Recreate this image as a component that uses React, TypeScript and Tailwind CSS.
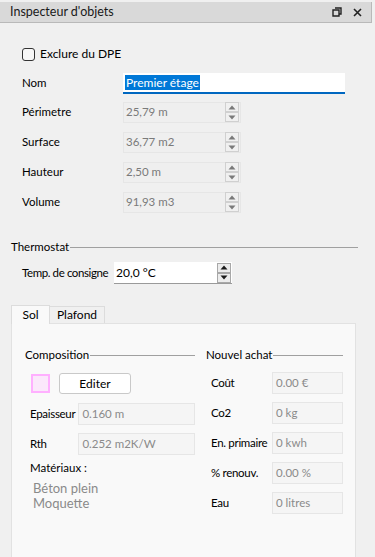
import React from "react";

const font = { fontFamily: "Lato, 'Noto Sans', sans-serif" };

function Spin({ active }: { active?: boolean }) {
  const tri = active ? "#1a1a1a" : "#7a7a7a";
  const box = active
    ? "w-[14px] h-[10px] border border-[#a8a8a8] bg-[#ececec] flex items-center justify-center"
    : "w-[14px] h-[10px] border border-[#d0d0d0] bg-[#f0f0f0] flex items-center justify-center";
  return (
    <div className="flex flex-col mr-[1px]">
      <div className={box}>
        <svg width="8" height="5" viewBox="0 0 8 5">
          <path d="M4 0.5 L7.5 4.5 L0.5 4.5 Z" fill={tri} />
        </svg>
      </div>
      <div className={box}>
        <svg width="8" height="5" viewBox="0 0 8 5">
          <path d="M0.5 0.5 L7.5 0.5 L4 4.5 Z" fill={tri} />
        </svg>
      </div>
    </div>
  );
}

function SpinRow({ label, value }: { label: string; value: string }) {
  return (
    <div className="flex items-center h-[30px]">
      <div className="w-[101px] text-[11.5px] text-black whitespace-nowrap">{label}</div>
      <div className="w-[118px] h-[21px] border border-[#e6e6e6] bg-[#efefef] flex items-center justify-between pl-[2px]">
        <span className="text-[11.5px] text-[#7a7a7a]">{value}</span>
        <Spin />
      </div>
    </div>
  );
}

function Field({ label, value, lw, fw }: { label: string; value: string; lw: string; fw: string }) {
  return (
    <div className="flex items-center h-[30px]">
      <div className={`${lw} text-[11.5px] tracking-[-0.3px] text-black whitespace-nowrap`}>{label}</div>
      <div className={`${fw} h-[22px] border border-[#e6e6e6] bg-[#f5f5f5] flex items-center pl-[3px]`}>
        <span className="text-[11.5px] text-[#8a8a8a] whitespace-nowrap">{value}</span>
      </div>
    </div>
  );
}

function Heading({ text }: { text: string }) {
  return (
    <div className="flex items-center h-[12px]">
      <span className="text-[11.5px] text-black leading-none">{text}</span>
      <div className="flex-1 h-px bg-[#a0a0a0] ml-[1px]" />
    </div>
  );
}

export default function App() {
  return (
    <div className="w-[375px] h-[557px] bg-[#f0f0f0] overflow-hidden" style={font}>
      <div className="h-[2px] bg-[#f0f0f0]" />
      <div className="h-[21px] bg-[#d9d9d9] border-b border-r border-[#b9b9b9] mr-[3px] flex items-center pl-[10px] pr-[9px]">
        <span className="text-[12.5px] text-[#1a1a1a] flex-1">Inspecteur d'objets</span>
        <svg width="10" height="10" viewBox="0 0 10 10" className="mr-[11px]">
          <path d="M3 1 H9 V7 H7 M1 3 H7 V9 H1 Z" fill="none" stroke="#222" strokeWidth="1.4" />
        </svg>
        <svg width="9" height="9" viewBox="0 0 9 9">
          <path d="M1 1 L8 8 M8 1 L1 8" stroke="#222" strokeWidth="1.6" />
        </svg>
      </div>

      <div className="pl-[22px] pt-[24px]">
        <div className="flex items-center h-[14px]">
          <div className="w-[13px] h-[13px] rounded-[3px] border border-[#333] bg-[#f7f7f7]" />
          <span className="ml-[5px] text-[12px] text-black">Exclure du DPE</span>
        </div>

        <div className="flex items-center h-[22px] mt-[11px]">
          <div className="w-[101px] text-[11.5px] text-black">Nom</div>
          <div className="w-[222px] h-[21px] bg-white border-b-2 border-[#0067c0] flex items-center pl-[2px]">
            <span className="text-[12px] text-white bg-[#0078d7] leading-[15px] px-px">Premier étage</span>
          </div>
        </div>

        <div className="mt-[3px]">
          <SpinRow label="Périmetre" value="25,79 m" />
          <SpinRow label="Surface" value="36,77 m2" />
          <SpinRow label="Hauteur" value="2,50 m" />
          <SpinRow label="Volume" value="91,93 m3" />
        </div>
      </div>

      <div className="pl-[11px] pr-[17px] mt-[24px]">
        <Heading text="Thermostat" />
      </div>

      <div className="flex items-center pl-[22px] mt-[9px]">
        <div className="w-[92px] text-[11.5px] tracking-[-0.4px] text-black whitespace-nowrap">Temp. de consigne</div>
        <div className="w-[118px] h-[22px] bg-white border-b border-[#9a9a9a] flex items-center justify-between pl-[2px]">
          <span className="text-[12px] text-black">20,0 °C</span>
          <Spin active />
        </div>
      </div>

      <div className="pl-[11px] mt-[21px] flex items-end h-[18px]">
        <div className="w-[39px] h-[19px] bg-[#f9f9f9] border border-b-0 border-[#dcdcdc] flex items-center justify-center text-[12px] text-black relative z-10 -mb-px">
          Sol
        </div>
        <div className="w-[55px] h-[17px] bg-[#f0f0f0] border border-l-0 border-b-0 border-[#dcdcdc] flex items-center justify-center text-[12px] text-black">
          Plafond
        </div>
      </div>
      <div className="ml-[11px] w-[345px] h-[240px] bg-[#f9f9f9] border border-[#e2e2e2] flex px-[13px] pt-[25px]">
        <div className="w-[170px]">
          <Heading text="Composition" />
          <div className="flex items-center mt-[12px] pl-[6px]">
            <div className="w-[19px] h-[19px] border-2 border-[#ffb0ff] bg-[#fbe8fb]" />
            <div className="ml-[9px] w-[72px] h-[21px] bg-white border border-[#c9c9c9] rounded-[3px] flex items-center justify-center text-[12px] text-black">
              Editer
            </div>
          </div>
          <div className="mt-[5px] pl-[5px]">
            <Field label="Epaisseur" value="0.160 m" lw="w-[49px]" fw="w-[118px]" />
            <Field label="Rth" value="0.252 m2K/W" lw="w-[49px]" fw="w-[118px]" />
          </div>
          <div className="pl-[5px] mt-0 text-[11.5px] text-black">Matériaux :</div>
          <div className="pl-[8px] mt-[5px] text-[13px] leading-[15px] text-[#8a8a8a]">
            <div>Béton plein</div>
            <div>Moquette</div>
          </div>
        </div>
        <div className="ml-[11px] w-[137px]">
          <Heading text="Nouvel achat" />
          <div className="mt-[7px] pl-[5px]">
            <Field label="Coût" value="0.00 €" lw="w-[61px]" fw="w-[71px]" />
            <Field label="Co2" value="0 kg" lw="w-[61px]" fw="w-[71px]" />
            <Field label="En. primaire" value="0 kwh" lw="w-[61px]" fw="w-[71px]" />
            <Field label="% renouv." value="0.00 %" lw="w-[61px]" fw="w-[71px]" />
            <Field label="Eau" value="0 litres" lw="w-[61px]" fw="w-[71px]" />
          </div>
        </div>
      </div>
    </div>
  );
}
